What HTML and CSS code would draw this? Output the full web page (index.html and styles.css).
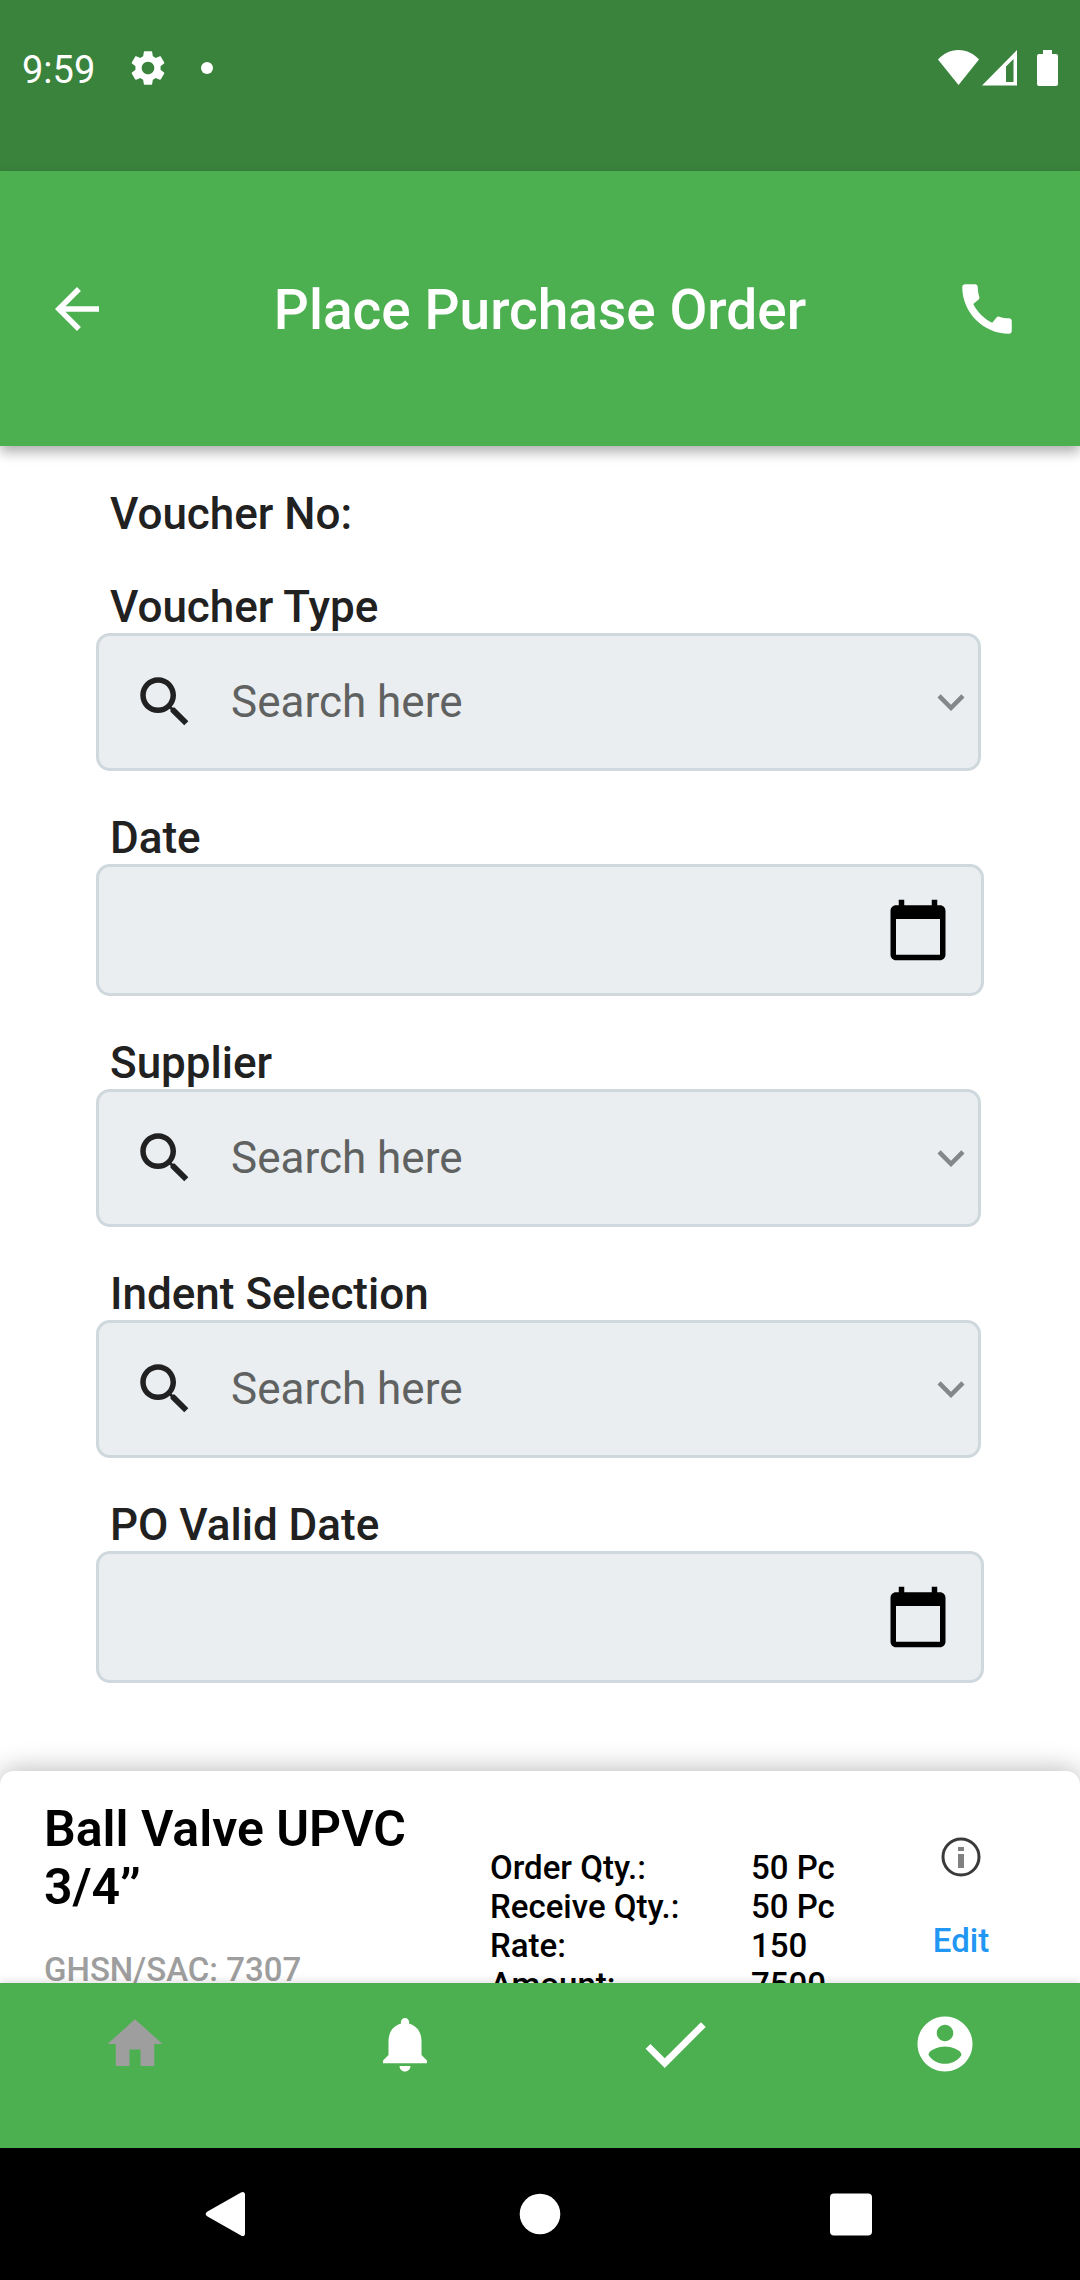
FILE: index.html
```html
<!DOCTYPE html>
<html lang="en">
<head>
<meta charset="utf-8">
<meta name="viewport" content="width=device-width, initial-scale=1">
<title>Place Purchase Order</title>
<link rel="stylesheet" href="styles.css">
</head>
<body>
<div class="status-bar">
  <div class="status-group status-left">
    <span class="clock">9:59</span>
    <svg class="icon-gear" viewBox="0 0 24 24" aria-hidden="true"><path d="M19.14 12.94c.04-.3.06-.61.06-.94 0-.32-.02-.64-.07-.94l2.03-1.58c.18-.14.23-.41.12-.61l-1.92-3.32c-.12-.22-.37-.29-.59-.22l-2.39.96c-.5-.38-1.03-.7-1.62-.94l-.36-2.54c-.04-.24-.24-.41-.48-.41h-3.84c-.24 0-.43.17-.47.41l-.36 2.54c-.59.24-1.13.57-1.62.94l-2.39-.96c-.22-.08-.47 0-.59.22L2.74 8.87c-.12.21-.08.47.12.61l2.03 1.58c-.05.3-.09.63-.09.94s.02.64.07.94l-2.03 1.58c-.18.14-.23.41-.12.61l1.92 3.32c.12.22.37.29.59.22l2.39-.96c.5.38 1.03.7 1.62.94l.36 2.54c.05.24.24.41.48.41h3.84c.24 0 .44-.17.47-.41l.36-2.54c.59-.24 1.13-.56 1.62-.94l2.39.96c.22.08.47 0 .59-.22l1.92-3.32c.12-.22.07-.47-.12-.61l-2.01-1.58zM12 15.6c-1.98 0-3.6-1.62-3.6-3.6s1.62-3.6 3.6-3.6 3.6 1.62 3.6 3.6-1.62 3.6-3.6 3.6z"/></svg>
    <span class="status-dot"></span>
  </div>
  <div class="status-group status-right">
    <svg width="41" height="36" viewBox="0 0 41 36" aria-hidden="true"><path d="M20.5 35 0 9.500C5 4 12 0 20.500 0S36 4 41 9.500z"/></svg>
    <svg width="35" height="36" viewBox="0 0 35 36" aria-hidden="true"><path fill-rule="evenodd" d="M35 0V35.500H0zM31.500 9 24 16.500v15.500h7.500z"/></svg>
    <svg width="38" height="36" viewBox="0 0 38 36" aria-hidden="true"><path d="M23 0h9v4h4a2 2 0 0 1 2 2v28a2 2 0 0 1-2 2H19a2 2 0 0 1-2-2V6a2 2 0 0 1 2-2h4z"/></svg>
  </div>
</div>

<header class="app-bar">
  <button class="icon-button" type="button" aria-label="Back">
    <svg class="icon" viewBox="0 0 24 24"><path d="M20 11H7.830l5.590-5.590L12 4l-8 8 8 8 1.410-1.410L7.830 13H20v-2z"/></svg>
  </button>
  <h1 class="app-title">Place Purchase Order</h1>
  <button class="icon-button call-button" type="button" aria-label="Call">
    <svg class="icon" viewBox="0 0 24 24"><path d="M20.010 15.380c-1.230 0-2.420-.200-3.530-.560-.350-.120-.740-.030-1.010.240l-1.570 1.970c-2.830-1.350-5.480-3.900-6.890-6.830l1.950-1.660c.270-.280.350-.670.240-1.020-.370-1.110-.560-2.300-.560-3.530 0-.540-.450-.990-.990-.990H4.190C3.650 3 3 3.240 3 3.990 3 13.280 10.730 21 20.010 21c.710 0 .990-.630.990-1.180v-3.450c0-.540-.450-.990-.990-.990z"/></svg>
  </button>
</header>

<main class="content">
  <form class="order-form">
    <p class="label">Voucher No:</p>

    <div class="field">
      <label class="label" for="voucher-type">Voucher Type</label>
      <div class="control control-search">
        <svg class="icon" viewBox="0 0 24 24" aria-hidden="true"><path d="M15.500 14h-.790l-.280-.270C15.410 12.590 16 11.110 16 9.500 16 5.910 13.090 3 9.500 3S3 5.910 3 9.500 5.910 16 9.500 16c1.610 0 3.090-.590 4.230-1.570l.270.280v.790l5 4.990L20.490 19l-4.990-5zm-6 0C7.010 14 5 11.990 5 9.500S7.010 5 9.500 5 14 7.010 14 9.500 11.990 14 9.500 14z"/></svg>
        <input class="input" id="voucher-type" type="text" placeholder="Search here">
        <button class="icon-button" type="button" aria-label="Show voucher types">
          <svg class="chevron" viewBox="0 0 24 24"><path d="M16.590 8.590 12 13.170 7.410 8.590 6 10l6 6 6-6z"/></svg>
        </button>
      </div>
    </div>

    <div class="field">
      <label class="label" for="date">Date</label>
      <div class="control control-date">
        <input class="input" id="date" type="text">
        <button class="icon-button" type="button" aria-label="Pick date">
          <svg class="icon" viewBox="0 0 24 24"><path d="M20 3h-1V1h-2v2H7V1H5v2H4c-1.100 0-2 .900-2 2v16c0 1.100.900 2 2 2h16c1.100 0 2-.900 2-2V5c0-1.100-.900-2-2-2zm0 18H4V8h16v13z"/></svg>
        </button>
      </div>
    </div>

    <div class="field">
      <label class="label" for="supplier">Supplier</label>
      <div class="control control-search">
        <svg class="icon" viewBox="0 0 24 24" aria-hidden="true"><path d="M15.500 14h-.790l-.280-.270C15.410 12.590 16 11.110 16 9.500 16 5.910 13.090 3 9.500 3S3 5.910 3 9.500 5.910 16 9.500 16c1.610 0 3.090-.590 4.230-1.570l.270.280v.790l5 4.990L20.490 19l-4.990-5zm-6 0C7.010 14 5 11.990 5 9.500S7.010 5 9.500 5 14 7.010 14 9.500 11.990 14 9.500 14z"/></svg>
        <input class="input" id="supplier" type="text" placeholder="Search here">
        <button class="icon-button" type="button" aria-label="Show suppliers">
          <svg class="chevron" viewBox="0 0 24 24"><path d="M16.590 8.590 12 13.170 7.410 8.590 6 10l6 6 6-6z"/></svg>
        </button>
      </div>
    </div>

    <div class="field">
      <label class="label" for="indent">Indent Selection</label>
      <div class="control control-search">
        <svg class="icon" viewBox="0 0 24 24" aria-hidden="true"><path d="M15.500 14h-.790l-.280-.270C15.410 12.590 16 11.110 16 9.500 16 5.910 13.090 3 9.500 3S3 5.910 3 9.500 5.910 16 9.500 16c1.610 0 3.090-.590 4.230-1.570l.270.280v.790l5 4.990L20.490 19l-4.990-5zm-6 0C7.010 14 5 11.990 5 9.500S7.010 5 9.500 5 14 7.010 14 9.500 11.990 14 9.500 14z"/></svg>
        <input class="input" id="indent" type="text" placeholder="Search here">
        <button class="icon-button" type="button" aria-label="Show indents">
          <svg class="chevron" viewBox="0 0 24 24"><path d="M16.590 8.590 12 13.170 7.410 8.590 6 10l6 6 6-6z"/></svg>
        </button>
      </div>
    </div>

    <div class="field">
      <label class="label" for="valid-date">PO Valid Date</label>
      <div class="control control-date">
        <input class="input" id="valid-date" type="text">
        <button class="icon-button" type="button" aria-label="Pick PO valid date">
          <svg class="icon" viewBox="0 0 24 24"><path d="M20 3h-1V1h-2v2H7V1H5v2H4c-1.100 0-2 .900-2 2v16c0 1.100.900 2 2 2h16c1.100 0 2-.900 2-2V5c0-1.100-.900-2-2-2zm0 18H4V8h16v13z"/></svg>
        </button>
      </div>
    </div>
  </form>

  <article class="item-card">
    <div class="item-name">
      <h2 class="item-title">Ball Valve UPVC 3/4’’</h2>
      <p class="item-code">GHSN/SAC: 7307</p>
    </div>
    <dl class="item-details">
      <dt>Order Qty.:</dt><dd>50 Pc</dd>
      <dt>Receive Qty.:</dt><dd>50 Pc</dd>
      <dt>Rate:</dt><dd>150</dd>
      <dt>Amount:</dt><dd>7500</dd>
    </dl>
    <div class="item-actions">
      <button class="icon-button" type="button" aria-label="Item information">
        <svg class="icon-info" viewBox="0 0 48 48"><circle cx="24" cy="24" r="18" fill="none" stroke="#3a3a3a" stroke-width="3"/><path fill="#808080" d="M21 14h6v4h-6zM21 21h6v14h-6z"/></svg>
      </button>
      <a class="edit-link" href="#edit">Edit</a>
    </div>
  </article>
</main>

<nav class="tab-bar" aria-label="Main">
  <a class="tab tab-muted" href="#home" aria-label="Home"><svg class="icon" viewBox="0 0 24 24"><path d="M10 20v-6h4v6h5v-8h3L12 3 2 12h3v8z"/></svg></a>
  <a class="tab" href="#notifications" aria-label="Notifications"><svg class="icon" viewBox="0 0 24 24"><path d="M12 22c1.100 0 2-.900 2-2h-4c0 1.100.890 2 2 2zm6-6v-5c0-3.070-1.640-5.640-4.500-6.320V4c0-.830-.670-1.500-1.500-1.500s-1.500.670-1.500 1.500v.680C7.630 5.360 6 7.920 6 11v5l-2 2v1h16v-1l-2-2z"/></svg></a>
  <a class="tab" href="#approvals" aria-label="Approvals"><svg class="icon icon-large" viewBox="0 0 24 24"><path d="M9 16.200 4.800 12l-1.400 1.400L9 19 21 7l-1.400-1.400z"/></svg></a>
  <a class="tab" href="#account" aria-label="Account"><svg class="icon" viewBox="0 0 24 24"><path d="M12 2C6.480 2 2 6.480 2 12s4.480 10 10 10 10-4.480 10-10S17.520 2 12 2zm0 3c1.660 0 3 1.340 3 3s-1.340 3-3 3-3-1.340-3-3 1.340-3 3-3zm0 14.200c-2.500 0-4.710-1.280-6-3.220.030-1.990 4-3.080 6-3.080 1.990 0 5.970 1.090 6 3.080-1.290 1.940-3.500 3.220-6 3.220z"/></svg></a>
</nav>

<div class="system-bar">
  <button class="icon-button" type="button" aria-label="System back"><svg class="icon-system" viewBox="0 0 60 60"><path d="M8.500 27.500 42 8.500c2-1.200 4-.500 4 2v39c0 2.500-2 3.200-4 2L8.500 32.500c-2.500-1.500-2.500-3.500 0-5z"/></svg></button>
  <button class="icon-button" type="button" aria-label="System home"><svg class="icon-system" viewBox="0 0 60 60"><circle cx="30" cy="30" r="20.300"/></svg></button>
  <button class="icon-button" type="button" aria-label="Recent apps"><svg class="icon-system" viewBox="0 0 60 60"><rect x="9" y="9.500" width="42" height="42" rx="4"/></svg></button>
</div>
</body>
</html>
```

FILE: styles.css
```css
:root {
  --green: #4caf50;
  --ink: #212121;
  --muted: #9e9e9e;
  --field: #eaeef1;
  --outline: #cfd8dc;
}

* {
  box-sizing: border-box;
}

body {
  display: flex;
  flex-direction: column;
  height: 100vh;
  margin: 0;
  background: #fff;
  color: #000;
  font-family: Roboto, "Noto Sans", sans-serif;
}

h1, h2, p, dl, dd {
  margin: 0;
}

svg {
  display: block;
  flex: none;
  fill: currentColor;
}

.icon {
  width: 66px;
  height: 66px;
}

.icon-large {
  width: 82px;
  height: 82px;
}

.icon-button {
  flex: none;
  padding: 0;
  border: 0;
  background: none;
  color: inherit;
  cursor: pointer;
}

/* Device status bar */

.status-bar {
  display: flex;
  flex: none;
  align-items: center;
  justify-content: space-between;
  height: 171px;
  padding: 0 22px 36px;
  background: #3a833d;
  color: #fff;
}

.status-group {
  display: flex;
  align-items: center;
}

.status-left {
  gap: 32px;
}

.status-right {
  gap: 3px;
}

.clock {
  padding-top: 4px;
  font-size: 38px;
  line-height: 44px;
}

.icon-gear {
  width: 42px;
  height: 42px;
}

.status-dot {
  width: 12px;
  height: 12px;
  border-radius: 50%;
  background: currentColor;
}

/* App bar */

.app-bar {
  position: relative;
  z-index: 1;
  display: grid;
  flex: none;
  grid-template-columns: 1fr auto 1fr;
  align-items: center;
  height: 275px;
  padding: 0 44px;
  background: var(--green);
  box-shadow: 0 6px 12px rgba(0, 0, 0, 0.32);
  color: #fff;
}

.app-title {
  padding-top: 2px;
  font-size: 55px;
  font-weight: 500;
  line-height: 64px;
}

.call-button {
  justify-self: end;
  margin-right: 16px;
}

.app-bar .icon-button:first-child {
  justify-self: start;
}

/* Order form */

.content {
  flex: 1;
  min-height: 0;
  overflow-y: auto;
  scrollbar-width: none;
}

.order-form {
  display: flex;
  flex-direction: column;
  gap: 41px;
  padding: 42px 96px 88px;
}

.label {
  display: block;
  padding-left: 14px;
  color: var(--ink);
  font-size: 44px;
  font-weight: 500;
  line-height: 52px;
}

.control {
  display: flex;
  align-items: center;
  border: 3px solid var(--outline);
  border-radius: 14px;
  background: var(--field);
}

.control-search {
  height: 138px;
  margin-right: 3px;
  padding-left: 33px;
  color: var(--ink);
}

.control-date {
  height: 132px;
  padding: 0 30px;
}

.input {
  flex: 1;
  min-width: 0;
  height: 100%;
  padding: 0;
  border: 0;
  outline: 0;
  background: none;
  color: var(--ink);
  font: 400 44px/52px Roboto, "Noto Sans", sans-serif;
}

.control-search .input {
  padding-left: 33px;
}

.input::placeholder {
  color: #606262;
  opacity: 1;
}

.chevron {
  width: 54px;
  height: 54px;
  color: #858687;
}

/* Item card */

.item-card {
  display: grid;
  grid-template-columns: 446fr 396fr 150fr;
  align-items: start;
  padding: 29px 44px;
  border-radius: 14px 14px 0 0;
  background: #fff;
  box-shadow: 0 0 28px rgba(0, 0, 0, 0.3);
}

.item-name {
  display: grid;
  gap: 34px;
}

.item-title {
  font-size: 50px;
  font-weight: 600;
  line-height: 58px;
}

.item-code,
.item-details,
.edit-link {
  font-size: 33px;
  font-weight: 500;
  line-height: 39px;
}

.item-code {
  color: var(--muted);
}

.item-details {
  display: grid;
  grid-template-columns: 261fr 135fr;
  padding-top: 48px;
}

.item-actions {
  display: grid;
  gap: 40px;
  justify-items: center;
  padding-top: 33px;
}

.icon-info {
  width: 48px;
  height: 48px;
}

.edit-link {
  color: #2196f3;
  text-decoration: none;
}

/* Bottom navigation */

.tab-bar {
  position: relative;
  display: grid;
  flex: none;
  grid-template-columns: repeat(4, 1fr);
  height: 165px;
  padding-bottom: 43px;
  background: var(--green);
  box-shadow: 0 -2px 8px rgba(0, 0, 0, 0.12);
}

.tab {
  display: grid;
  place-items: center;
  color: #fff;
}

.tab-muted {
  color: var(--muted);
}

/* Device navigation */

.system-bar {
  display: grid;
  flex: none;
  grid-template-columns: repeat(3, 1fr);
  place-items: center;
  height: 132px;
  padding: 0 74px;
  background: #000;
  color: #fff;
}

.icon-system {
  width: 60px;
  height: 60px;
}
```
